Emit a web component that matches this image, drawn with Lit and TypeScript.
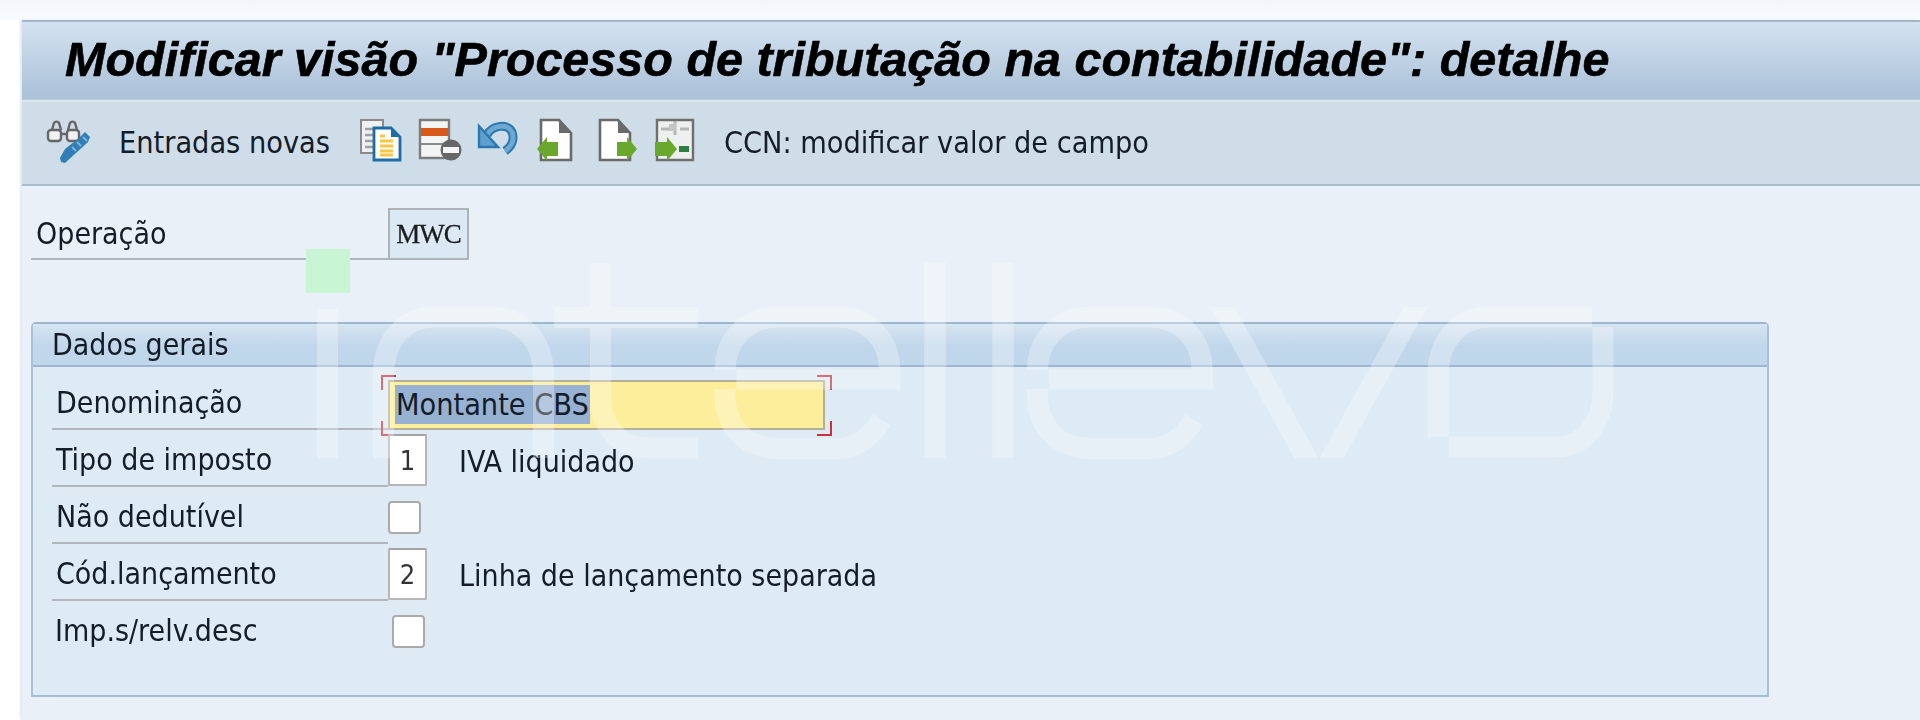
import { LitElement, html, css, svg } from "lit";
import { customElement } from "lit/decorators.js";

const TITLE = 'Modificar visão "Processo de tributação na contabilidade": detalhe';

const iconFind = svg`
  <g stroke="#666" stroke-width="2.4">
    <path d="M5 11l2-7a3 3 0 0 1 5 0l2 7" fill="none"/>
    <path d="M21 11l2-7a3 3 0 0 1 5 0l2 7" fill="none"/>
    <rect x="1" y="11" width="13" height="11" rx="3" fill="#f2f2f2"/>
    <rect x="20" y="11" width="12" height="11" rx="3" fill="#f2f2f2"/>
    <path d="M14 15h6" fill="none"/>
  </g>
  <path d="M38 13l5 5-2 5-23 21-4-1-1-4 5-9 14-11z" fill="#2f7fb5"/>
  <path d="M36 18l4 4M25 28l4 4M30 23l4 4" stroke="#7fb6da" stroke-width="2"/>
`;
const iconCopy = svg`
  <path d="M1 1h22v33H1z" fill="#eef0f2" stroke="#8a8a8a" stroke-width="2"/>
  <path d="M5 10h8M5 16h8M5 22h8M5 28h8" stroke="#a0a0a0" stroke-width="2.4"/>
  <path d="M14 9h17l9 9v23H14z" fill="#fff" stroke="#1c6ca6" stroke-width="2.8"/>
  <path d="M31 9v9h9z" fill="#1c6ca6"/>
  <path d="M20 17h5M20 22h13M20 27h13M20 32h13M20 36h13" stroke="#f6c744" stroke-width="3"/>
`;
const iconDelete = svg`
  <path d="M1 1h29v38H1z" fill="#f3f4f4" stroke="#7c7c7c" stroke-width="2.4"/>
  <rect x="2" y="9" width="27" height="8" fill="#d9591b"/>
  <path d="M2 25h27" stroke="#8a8a8a" stroke-width="2"/>
  <circle cx="32" cy="31" r="10.5" fill="#666"/>
  <rect x="24" y="28" width="16" height="6" fill="#f5f5f5"/>
`;
const iconUndo = svg`
  <path d="M9 16C14 6 30 4 34 13 37 21 33 28 27 32" fill="none" stroke="#2a78b0" stroke-width="9"/>
  <path d="M9 16C14 6 30 4 34 13 37 21 33 28 27 32" fill="none" stroke="#6ea8d2" stroke-width="5"/>
  <path d="M1 7v21h19z" fill="#5f9fce" stroke="#2a78b0" stroke-width="2.4"/>
`;
const iconImport = svg`
  <path d="M4 1h18l12 13v27H4z" fill="#fff" stroke="#6a6a6a" stroke-width="2.6"/>
  <path d="M22 1v13h12z" fill="#6a6a6a"/>
  <path d="M0 30l10-12v5h11v14H10v5z" fill="#68a82c"/>
`;
const iconExport = svg`
  <path d="M4 1h18l12 13v27H4z" fill="#fff" stroke="#6a6a6a" stroke-width="2.6"/>
  <path d="M22 1v13h12z" fill="#6a6a6a"/>
  <path d="M41 30l-10-12v5H21v14h10v5z" fill="#68a82c"/>
`;
const iconTransfer = svg`
  <path d="M2 1h36v40H2z" fill="#eef0f0" stroke="#6f6f6f" stroke-width="2.4"/>
  <path d="M20 2v14M6 10h9M25 10h9" stroke="#b5b5b5" stroke-width="3"/>
  <path d="M14 5h7v7h-7z" fill="#c4c4c4"/>
  <path d="M22 30L12 18v5H0v14h12v5z" fill="#68a82c"/>
  <rect x="24" y="27" width="10" height="6" fill="#2f7d45"/>
`;

@customElement("app-root")
export class AppRoot extends LitElement {
  static styles = css`
    :host { display: block; width: 1920px; height: 720px; overflow: hidden; background: #fff; }
    * { box-sizing: border-box; }
    .screen {
      position: relative; width: 1920px; height: 720px;
      display: flex; flex-direction: column;
      font-family: "DejaVu Sans Condensed", "DejaVu Sans", sans-serif;
      font-size: 30px; color: #141c28;
      filter: blur(0.6px);
    }
    .topstrip { height: 20px; flex: none; background: linear-gradient(#f4f6fa, #f8fafc); }
    .main { flex: 1; margin-left: 22px; display: flex; flex-direction: column; background: #e9f0f7; box-shadow: -2px 0 2px #e3e9f0; }
    .title {
      flex: none; height: 80px; display: flex; align-items: center; padding: 0 0 4px 43px;
      background: linear-gradient(#d3e2ef, #adc3da 92%);
      border-top: 2px solid #a3b6cd; border-bottom: 1px solid #bccbdc;
      font: italic bold 48.5px "Liberation Sans", Arial, sans-serif; color: #000;
      -webkit-text-stroke: 0.6px #000;
      white-space: nowrap;
    }
    .toolbar {
      flex: none; height: 86px; display: flex; align-items: center; padding: 0 0 2px 25px;
      background: #cfdde8; border-top: 2px solid #dbe5ed; border-bottom: 2px solid #a9bccb;
      font-size: 30.3px;
    }
    .toolbar svg { flex: none; width: 44px; height: 44px; overflow: visible; margin-top: -2px; }
    .entries { margin: 0 30px 0 28px; }
    .icons { display: flex; gap: 15px; }
    .ccn { margin-left: 25px; }
    .content { flex: 1; padding: 22px 0 0 9px; }
    .op { display: flex; height: 52px; }
    .op-label { width: 357px; padding-left: 5px; line-height: 52px; border-bottom: 2px solid #b0b6bc; }
    .op-value {
      width: 81px; height: 52px; display: flex; align-items: center; justify-content: center;
      border: 2px solid #aeb3b8; background: #dce9f4;
      font: 27px "Liberation Serif", serif; letter-spacing: -1px; color: #1c1c1c;
      -webkit-text-stroke: 0.3px #1c1c1c;
    }
    .panel {
      margin-top: 62px; width: 1738px; height: 375px; display: flex; flex-direction: column;
      border: 2px solid #a8c0da; border-top-color: #9db7d3; border-bottom-color: #a3bcd6;
      border-radius: 5px 5px 0 0; background: #deeaf4;
    }
    .panel-head {
      flex: none; height: 43px; display: flex; align-items: center; padding-left: 19px;
      background: linear-gradient(#d6e4f1, #c0d6ea 55%);
      border-bottom: 2px solid #9db7d3;
    }
    .rows { display: flex; flex-direction: column; gap: 5.9px; padding: 12px 0 0 19px; }
    .row { display: flex; height: 51px; align-items: center; position: relative; }
    .label { width: 336px; height: 51px; flex: none; padding-left: 4px; line-height: 48px; border-bottom: 2px solid #b0b6bc; white-space: nowrap; }
    .label.plain { border-bottom: 0; padding-left: 3px; }
    .code {
      width: 39px; height: 52px; flex: none; margin-top: -2px; display: flex; align-items: center; justify-content: center;
      background: #fff; border: 2px solid #b6b6b6; border-top-color: #a4a4a4; border-radius: 2px; color: #333;
      font-size: 27px;
    }
    .desc { margin-left: 32px; white-space: nowrap; }
    .check { width: 33px; height: 33px; flex: none; margin-top: -2px; background: #fff; border: 2px solid #aaa; border-radius: 4px; }
    .check.shift { margin-left: 4px; }
    .field {
      position: relative; width: 437px; height: 50px; flex: none;
      display: flex; align-items: center; padding-left: 5px;
      background: #fdee9c; border: 2px solid #b3b09a;
    }
    .sel { background: #97b1d2; height: 39px; line-height: 39px; padding: 0 1px 0 1px; white-space: nowrap; color: #141c28; font-size: 30.3px; }
    .corner { position: absolute; width: 15px; height: 15px; border: 0 solid #c8323a; }
    .tl { left: -9px; top: -7px; border-width: 2px 0 0 2px; }
    .tr { right: -9px; top: -7px; border-width: 2px 2px 0 0; }
    .bl { left: -9px; bottom: -8px; border-width: 0 0 2px 2px; }
    .br { right: -9px; bottom: -8px; border-width: 0 2px 2px 0; }
    .mark { position: absolute; left: 0; top: 0; width: 1920px; height: 720px; pointer-events: none; }
    .green { position: absolute; left: 306px; top: 249px; width: 44px; height: 44px; background: #c8f5d3; }
  `;

  private rows = [
    { label: "Tipo de imposto", code: "1", desc: "IVA liquidado" },
    { label: "Não dedutível", check: true },
    { label: "Cód.lançamento", code: "2", desc: "Linha de lançamento separada" },
  ];

  private icon(body: unknown) {
    return html`<svg viewBox="0 0 44 44">${body}</svg>`;
  }

  render() {
    return html`
      <div class="screen">
        <div class="topstrip"></div>
        <div class="main">
          <div class="title">${TITLE}</div>
          <div class="toolbar">
            ${this.icon(iconFind)}
            <span class="entries">Entradas novas</span>
            <div class="icons">
              ${[iconCopy, iconDelete, iconUndo, iconImport, iconExport, iconTransfer].map((i) => this.icon(i))}
            </div>
            <span class="ccn">CCN: modificar valor de campo</span>
          </div>
          <div class="content">
            <div class="op">
              <div class="op-label">Operação</div>
              <div class="op-value">MWC</div>
            </div>
            <div class="panel">
              <div class="panel-head">Dados gerais</div>
              <div class="rows">
                <div class="row">
                  <div class="label">Denominação</div>
                  <div class="field">
                    <span class="sel">Montante CBS</span>
                    <i class="corner tl"></i><i class="corner tr"></i><i class="corner bl"></i><i class="corner br"></i>
                  </div>
                </div>
                ${this.rows.map(
                  (r) => html`
                    <div class="row">
                      <div class="label">${r.label}</div>
                      ${r.check
                        ? html`<div class="check"></div>`
                        : html`<div class="code">${r.code}</div><span class="desc">${r.desc}</span>`}
                    </div>
                  `,
                )}
                <div class="row">
                  <div class="label plain">Imp.s/relv.desc</div>
                  <div class="check shift"></div>
                </div>
              </div>
            </div>
          </div>
        </div>
        <svg class="mark" viewBox="0 0 1920 720" aria-hidden="true">
          <defs><clipPath id="v"><rect x="1190" y="307" width="260" height="151"/></clipPath></defs>
          <g fill="none" stroke="#fff" stroke-width="21" opacity="0.3">
            <path d="M327.5 309V458"/>
            <path d="M383.5 458V375C383.5 340 405 317 435 317H490C520 317 543.5 340 543.5 375V458"/>
            <path d="M600.5 263V395C600.5 428 620 448 650 448H698M554 317.5H698"/>
            <g>
              <path d="M725 370C725 340 747 317 778 317H838C868 317 889.5 340 889.5 369M736.5 379H900.5"/>
              <path d="M725 389V395C725 428 747 448.5 778 448.5H838C858 448.5 872 435 882 420"/>
            </g>
            <path d="M924 262V458M992 262V458" transform="translate(11 0)" stroke-width="21.5"/>
            <g transform="translate(312.5 0)">
              <path d="M725 370C725 340 747 317 778 317H838C868 317 889.5 340 889.5 369M736.5 379H900.5"/>
              <path d="M725 389V395C725 428 747 448.5 778 448.5H838C858 448.5 872 435 882 420"/>
            </g>
            <g clip-path="url(#v)">
              <path d="M1206 277L1323 488M1432 277L1315 488" stroke-width="21"/>
            </g>
            <path d="M1438 437V375C1438 340 1460 317 1490 317H1592"/>
            <path d="M1603 327V390C1603 422 1585 447 1555 447H1449"/>
          </g>
        </svg>
        <div class="green"></div>
      </div>
    `;
  }
}
